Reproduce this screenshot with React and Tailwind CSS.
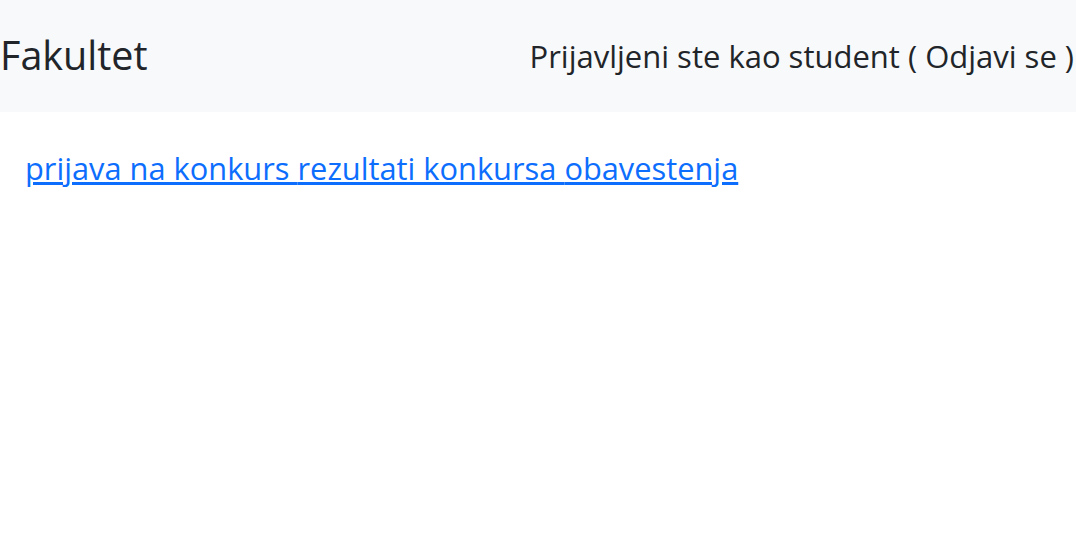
export default function App() {
  const font = { fontFamily: '"Open Sans", "Noto Sans", sans-serif' };
  return (
    <div className="min-h-[542px] bg-white text-[#212529]" style={font}>
      <nav className="flex h-[112px] items-center justify-between bg-[#f8f9fa]">
        <span className="text-[39.5px] leading-none">Fakultet</span>
        <span className="pr-[2px] text-[31px] leading-none">Prijavljeni ste kao student ( Odjavi se )</span>
      </nav>
      <div className="px-[25px] pt-[34px] text-[30.8px] leading-[44px]">
        <a href="#" className="text-[#0d6efd] underline">{"prijava na konkurs "}</a>
        <a href="#" className="text-[#0d6efd] underline">{"rezultati konkursa "}</a>
        <a href="#" className="text-[#0d6efd] underline">obavestenja</a>
      </div>
    </div>
  );
}
